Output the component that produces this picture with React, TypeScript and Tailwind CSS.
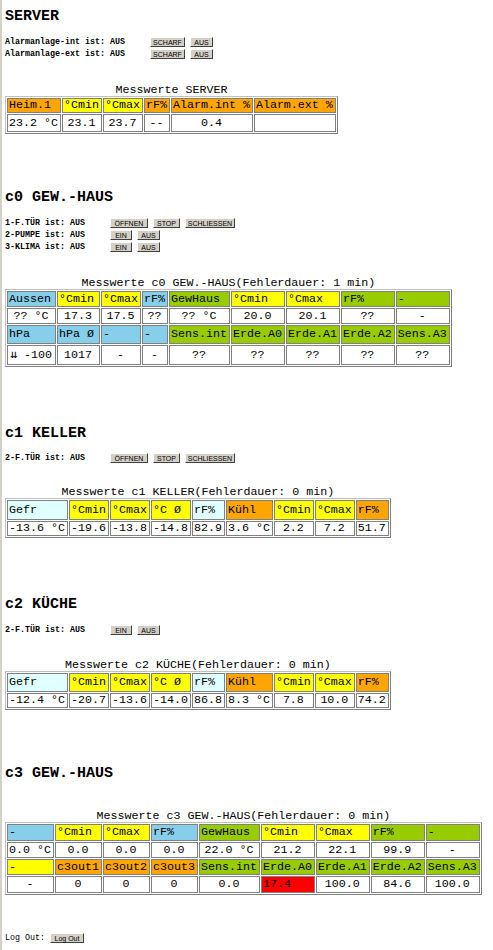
import React from "react";

type Cell = { t: string; bg?: string; left?: boolean; w?: string };
type Btn = { t: string; w: string };
type CtrlRow = { label: string; buttons: Btn[] };

const B = "bg-[#87ceeb]";
const Y = "bg-[#ffff00]";
const G = "bg-[#99cc00]";
const O = "bg-[#ffa500]";
const C = "bg-[#e0ffff]";
const R = "bg-[#ff0000]";

const h = (t: string, bg: string, w?: string): Cell => ({ t, bg, left: true, w });
const d = (...vals: string[]): Cell[] => vals.map((t) => ({ t }));

// row heights per table (cell incl. border)
const serverRows = {
  heights: ["h-[15px]", "h-[18px]"],
  rows: [
    [h("Heim.1", O), h("°Cmin", Y), h("°Cmax", Y), h("rF%", O), h("Alarm.int %", O), h("Alarm.ext %", O)],
    d("23.2 °C", "23.1", "23.7", "--", "0.4", ""),
  ],
};

const c0Rows = {
  heights: ["h-[16px]", "h-[16px]", "h-[19px]", "h-[20px]"],
  rows: [
    [h("Aussen", B, "w-[49px]"), h("°Cmin", Y, "w-[43px]"), h("°Cmax", Y), h("rF%", B), h("GewHaus", G), h("°Cmin", Y), h("°Cmax", Y), h("rF%", G), h("-", G)],
    d("?? °C", "17.3", "17.5", "??", "?? °C", "20.0", "20.1", "??", "-"),
    [h("hPa", B), h("hPa Ø", B), h("-", B), h("-", B), h("Sens.int", G), h("Erde.A0", G), h("Erde.A1", G), h("Erde.A2", G), h("Sens.A3", G)],
    d("⇊ -100", "1017", "-", "-", "??", "??", "??", "??", "??"),
  ],
};

const kuehlHead = [h("Gefr", C), h("°Cmin", Y), h("°Cmax", Y), h("°C Ø", Y), h("rF%", C), h("Kühl", O), h("°Cmin", Y), h("°Cmax", Y), h("rF%", O)];

const c1Rows = {
  heights: ["h-[20px]", "h-[15px]"],
  rows: [kuehlHead, d("-13.6 °C", "-19.6", "-13.8", "-14.8", "82.9", "3.6 °C", "2.2", "7.2", "51.7")],
};

const c2Rows = {
  heights: ["h-[19px]", "h-[15px]"],
  rows: [kuehlHead, d("-12.4 °C", "-20.7", "-13.6", "-14.0", "86.8", "8.3 °C", "7.8", "10.0", "74.2")],
};

const c3Rows = {
  heights: ["h-[17px]", "h-[16px]", "h-[16px]", "h-[17px]"],
  rows: [
    [h("-", B), h("°Cmin", Y), h("°Cmax", Y), h("rF%", B), h("GewHaus", G), h("°Cmin", Y), h("°Cmax", Y), h("rF%", G), h("-", G)],
    d("0.0 °C", "0.0", "0.0", "0.0", "22.0 °C", "21.2", "22.1", "99.9", "-"),
    [h("-", Y), h("c3out1", O), h("c3out2", O), h("c3out3", O), h("Sens.int", G), h("Erde.A0", G), h("Erde.A1", G), h("Erde.A2", G), h("Sens.A3", G)],
    [...d("-", "0", "0", "0", "0.0"), { t: "17.4", bg: R, left: true }, ...d("100.0", "84.6", "100.0")],
  ],
};

const Heading = ({ text, mt }: { text: string; mt: string }) => (
  <h2 className={`${mt} h-[18px] leading-[18px] text-[15px] font-bold font-['Liberation_Mono',monospace] whitespace-pre`}>
    {text}
  </h2>
);

const Button = ({ b }: { b: Btn }) => (
  <button
    className={`${b.w} h-[10px] p-0 flex items-center justify-center bg-[#d4d0c8] border border-t-white border-l-white border-r-[#404040] border-b-[#404040] font-['Liberation_Sans',sans-serif] text-[7px] leading-none text-black`}
  >
    {b.t}
  </button>
);

const Controls = ({ labelW, rows, mt }: { labelW: string; rows: CtrlRow[]; mt: string }) => (
  <div className={mt}>
    {rows.map((r) => (
      <div key={r.label} className="flex items-center h-[12px]">
        <span className={`${labelW} shrink-0 font-['Liberation_Mono',monospace] font-bold text-[8.33px] leading-none whitespace-pre`}>
          {r.label}
        </span>
        <div className="flex gap-[5px]">
          {r.buttons.map((b) => (
            <Button key={b.t} b={b} />
          ))}
        </div>
      </div>
    ))}
  </div>
);

const DataTable = ({
  caption,
  data,
  mt,
}: {
  caption: string;
  data: { heights: string[]; rows: Cell[][] };
  mt: string;
}) => (
  <table
    className={`${mt} border-separate border-spacing-[1px] border border-t-[#c0c0c0] border-l-[#c0c0c0] border-r-[#808080] border-b-[#808080] font-['Liberation_Mono',monospace] text-[11.67px] text-black`}
  >
    <caption className="h-[12px] leading-[12px] whitespace-pre">{caption}</caption>
    <tbody>
      {data.rows.map((row, i) => (
        <tr key={i} className={data.heights[i]}>
          {row.map((c, j) => (
            <td
              key={j}
              className={`border border-[#808080] pl-[1px] pr-[2px] py-0 leading-[13px] whitespace-pre ${c.w ?? ""} ${c.bg ?? "bg-white"} ${
                c.left ? "text-left" : "text-center"
              }`}
            >
              {c.t}
            </td>
          ))}
        </tr>
      ))}
    </tbody>
  </table>
);

const oeffnen: Btn[] = [
  { t: "ÖFFNEN", w: "w-[38px]" },
  { t: "STOP", w: "w-[27px]" },
  { t: "SCHLIESSEN", w: "w-[50px]" },
];
const einAus: Btn[] = [
  { t: "EIN", w: "w-[22px]" },
  { t: "AUS", w: "w-[23px]" },
];
const scharf: Btn[] = [
  { t: "SCHARF", w: "w-[35px]" },
  { t: "AUS", w: "w-[23px]" },
];

export default function App() {
  return (
    <div className="min-h-[950px] bg-white border-l-2 border-[#d4d0c8] pl-[3px] pt-[8px] text-black">
      {/* SERVER */}
      <Heading text="SERVER" mt="mt-0" />
      <Controls
        mt="mt-[10px]"
        labelW="w-[145px]"
        rows={[
          { label: "Alarmanlage-int ist: AUS", buttons: scharf },
          { label: "Alarmanlage-ext ist: AUS", buttons: scharf },
        ]}
      />
      <DataTable mt="mt-[24px]" caption="Messwerte SERVER" data={serverRows} />

      {/* c0 */}
      <Heading text="c0 GEW.-HAUS" mt="mt-[55px]" />
      <Controls
        mt="mt-[10px]"
        labelW="w-[105px]"
        rows={[
          { label: "1-F.TÜR ist: AUS", buttons: oeffnen },
          { label: "2-PUMPE ist: AUS", buttons: einAus },
          { label: "3-KLIMA ist: AUS", buttons: einAus },
        ]}
      />
      <DataTable mt="mt-[24px]" caption="Messwerte c0 GEW.-HAUS(Fehlerdauer: 1 min)" data={c0Rows} />

      {/* c1 */}
      <Heading text="c1 KELLER" mt="mt-[58px]" />
      <Controls mt="mt-[9px]" labelW="w-[105px]" rows={[{ label: "2-F.TÜR ist: AUS", buttons: oeffnen }]} />
      <DataTable mt="mt-[22px]" caption="Messwerte c1 KELLER(Fehlerdauer: 0 min)" data={c1Rows} />

      {/* c2 */}
      <Heading text="c2 KÜCHE" mt="mt-[58px]" />
      <Controls mt="mt-[10px]" labelW="w-[105px]" rows={[{ label: "2-F.TÜR ist: AUS", buttons: einAus }]} />
      <DataTable mt="mt-[23px]" caption="Messwerte c2 KÜCHE(Fehlerdauer: 0 min)" data={c2Rows} />

      {/* c3 */}
      <Heading text="c3 GEW.-HAUS" mt="mt-[55px]" />
      <DataTable mt="mt-[27px]" caption="Messwerte c3 GEW.-HAUS(Fehlerdauer: 0 min)" data={c3Rows} />

      {/* Log Out */}
      <div className="mt-[37px] flex items-center h-[12px]">
        <span className="w-[45px] shrink-0 font-['Liberation_Mono',monospace] text-[8.33px] leading-none whitespace-pre">
          Log Out:
        </span>
        <Button b={{ t: "Log Out", w: "w-[34px]" }} />
      </div>
    </div>
  );
}
